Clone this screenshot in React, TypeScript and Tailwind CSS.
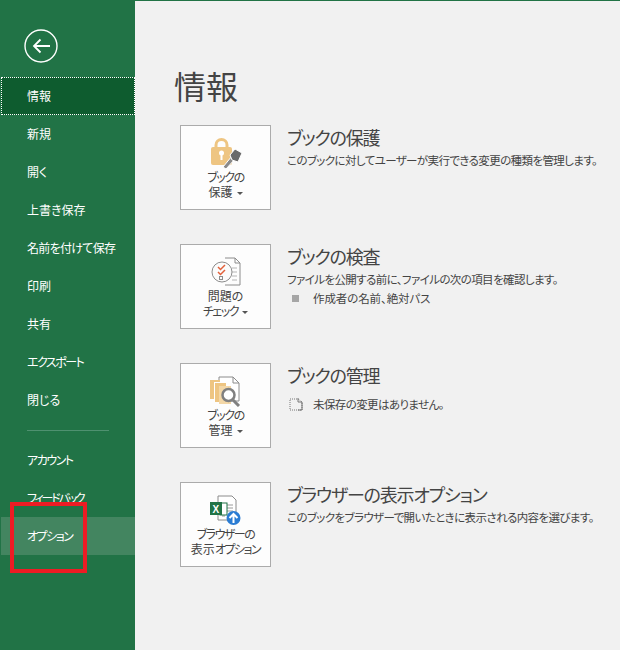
const font = { fontFamily: '"Noto Sans CJK JP", sans-serif' };

// kana is set much tighter than kanji in the original UI font
const K = ({ children }: { children: React.ReactNode }) => <span className="tracking-[-1.5px]">{children}</span>;

const topItems: React.ReactNode[] = [
  "新規",
  "開く",
  "上書き保存",
  <span className="tracking-[-0.7px]">名前を付けて保存</span>,
  "印刷",
  "共有",
  <K>エクスポート</K>,
  "閉じる",
];

function NavItem({ label, hover }: { label: React.ReactNode; hover?: boolean }) {
  return (
    <div className={`ml-px h-[38px] flex items-center pl-[26px] text-[12px] text-white ${hover ? "bg-[#438560]" : ""}`}>
      {label}
    </div>
  );
}

function Caret() {
  return <span className="inline-block ml-[4px] align-middle w-0 h-0 border-x-[3px] border-x-transparent border-t-[3px] border-t-[#555]" />;
}

function LockIcon() {
  return (
    <svg width="32" height="32" viewBox="0 0 32 32">
      <path d="M6 11V8a5.5 5.5 0 0 1 11 0v3" fill="none" stroke="#eec582" strokeWidth="3" />
      <rect x="1" y="10" width="21" height="18" rx="2" fill="#eec582" />
      <circle cx="11.5" cy="16" r="2.5" fill="#fff" />
      <rect x="10.5" y="17" width="2" height="6" fill="#fff" />
      <path d="M13 30l9-11 3 3-9 10z" fill="#8a8a8a" stroke="#fff" strokeWidth="1" />
      <path d="M20 18l5-6 7 4-4 9-6-2z" fill="#6a6a6a" stroke="#fff" strokeWidth="1" />
    </svg>
  );
}

function CheckIcon() {
  return (
    <svg width="30" height="30" viewBox="0 0 30 30" fill="none">
      <path d="M14 1h10l5 5v22H14" stroke="#8c8c8c" />
      <path d="M24 1v5h5" stroke="#8c8c8c" />
      <path d="M21 11h5M21 15h5M21 19h5M21 23h5" stroke="#b5b5b5" />
      <circle cx="11" cy="15" r="10" fill="#fbfbfb" stroke="#8c8c8c" />
      <path d="M7 10l2.5 2.5L14 8M7 15l2.5 2.5L14 13" stroke="#e2603a" strokeWidth="1.5" />
      <rect x="8.5" y="19.5" width="3" height="3" stroke="#8c8c8c" />
    </svg>
  );
}

function ManageIcon() {
  return (
    <svg width="31" height="31" viewBox="0 0 31 31" fill="none">
      <path d="M9 1h14l6 6v18H9z" fill="#fff" stroke="#8c8c8c" />
      <path d="M23 1v6h6" stroke="#8c8c8c" />
      <rect x="0" y="4" width="10" height="19" fill="#eec582" />
      <rect x="4" y="6" width="12" height="20" fill="#fff" />
      <rect x="5" y="7" width="11" height="19" fill="#eec582" />
      <rect x="9" y="10" width="12" height="18" fill="#f3d7a7" />
      <circle cx="18.5" cy="19" r="6" fill="#fff" stroke="#808080" strokeWidth="2.5" />
      <path d="M23 24l6 6" stroke="#808080" strokeWidth="3" />
    </svg>
  );
}

function BrowserIcon() {
  return (
    <svg width="31" height="31" viewBox="0 0 31 31" fill="none">
      <path d="M8 1h14l4 4v20H8z" fill="#fff" stroke="#8c8c8c" />
      <path d="M17 10h6M17 13h6M17 16h6M12 21h3" stroke="#9a9a9a" />
      <rect x="10" y="8" width="7" height="12" fill="#fff" stroke="#217346" />
      <rect x="0" y="7" width="12" height="13" fill="#217346" />
      <text x="2.5" y="17.5" fontSize="10" fontWeight="700" fill="#fff" fontFamily="Liberation Sans">X</text>
      <circle cx="23.5" cy="23" r="7" fill="#2b7cd3" />
      <path d="M23.5 28v-9M19.5 23l4-4 4 4" stroke="#fff" strokeWidth="2" />
    </svg>
  );
}

function Card({ icon, lines, caret }: { icon: React.ReactNode; lines: React.ReactNode[]; caret?: boolean }) {
  return (
    <div className="w-[91px] h-[85px] shrink-0 bg-[#fdfdfd] border border-[#ababab] flex flex-col items-center pt-[11px]">
      <div className="h-[32px] flex items-center">{icon}</div>
      <div className="text-[12px] leading-[15px] text-[#444] text-center">
        {lines.map((l, i) => (
          <div key={i}>
            {l}
            {caret && i === lines.length - 1 && <Caret />}
          </div>
        ))}
      </div>
    </div>
  );
}

function Section({ title, children, card }: { title: string; children: React.ReactNode; card: React.ReactNode }) {
  return (
    <div className="flex h-[85px]">
      {card}
      <div className="ml-[16px] text-[#444]">
        <div className="text-[18px] leading-[27px] tracking-[-1.2px] -mt-[1px]">{title}</div>
        <div className="text-[11.5px] leading-[18px] tracking-[-0.6px]">{children}</div>
      </div>
    </div>
  );
}

export default function App() {
  return (
    <div style={font} className="relative w-[620px] h-[650px] flex overflow-hidden bg-[#f1f1f1] [font-feature-settings:'palt']">
      <aside className="w-[135px] shrink-0 bg-[#217346] flex flex-col">
        <div className="h-[77px] pl-[24px] pt-[29px]">
          <svg width="34" height="34" viewBox="0 0 34 34" fill="none" stroke="#fff">
            <circle cx="17" cy="17" r="16" strokeWidth="1.4" />
            <path d="M26 17H10M16.5 10.5L10 17l6.5 6.5" strokeWidth="1.8" />
          </svg>
        </div>
        <div className="ml-px h-[38px] flex items-center pl-[25px] text-[12px] text-white bg-[#0e5c2f] border border-dotted border-white">
          情報
        </div>
        {topItems.map((label, i) => (
          <NavItem key={i} label={label} />
        ))}
        <div className="ml-[27px] mr-[26px] mt-[11px] mb-[10px] border-t border-[#4f9170]" />
        <NavItem label={<K>アカウント</K>} />
        <NavItem label={<span className="tracking-[-2.2px]">フィードバック</span>} />
        <NavItem label={<K>オプション</K>} hover />
      </aside>

      <main className="flex-1 border-t border-[#217346] pl-[39px]">
        <h1 className="text-[32px] leading-[44px] text-[#444] mt-[62px] mb-[18px]">情報</h1>
        <div className="ml-[6px] flex flex-col gap-[34px]">
          <Section title="ブックの保護" card={<Card icon={<LockIcon />} lines={[<K>ブックの</K>, "保護"]} caret />}>
            このブックに対してユーザーが実行できる変更の種類を管理します。
          </Section>
          <Section title="ブックの検査" card={<Card icon={<CheckIcon />} lines={["問題の", <K>チェック</K>]} caret />}>
            <div>ファイルを公開する前に、ファイルの次の項目を確認します。</div>
            <div className="flex items-center mt-px tracking-[-0.1px]">
              <span className="w-[7px] h-[7px] ml-[5px] mr-[14px] bg-[#a6a6a6]" />
              作成者の名前、絶対パス
            </div>
          </Section>
          <Section title="ブックの管理" card={<Card icon={<ManageIcon />} lines={[<K>ブックの</K>, "管理"]} caret />}>
            <div className="flex items-center mt-[6px]">
              <svg width="14" height="14" viewBox="0 0 14 14" fill="none" className="ml-[2px] mr-[10px]">
                <path d="M1 2h8l4 3v8H1z" stroke="#777" strokeDasharray="1 1" />
                <path d="M9 1v4h4M13 5v8H9" stroke="#777" />
              </svg>
              未保存の変更はありません。
            </div>
          </Section>
          <Section title="ブラウザーの表示オプション" card={<Card icon={<BrowserIcon />} lines={[<K>ブラウザーの</K>, <>表示<K>オプション</K></>]} />}>
            このブックをブラウザーで開いたときに表示される内容を選びます。
          </Section>
        </div>
      </main>

      <div className="absolute left-[10px] top-[502px] w-[77px] h-[71px] border-[4px] border-[#ed1c24]" />
    </div>
  );
}
